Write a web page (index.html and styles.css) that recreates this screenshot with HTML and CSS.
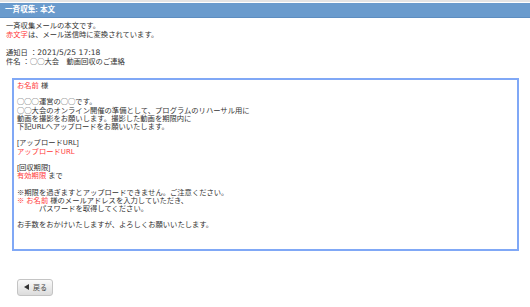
FILE: index.html
```html
<!DOCTYPE html>
<html>
<head>
    <title>一斉収集: 本文</title>
    <link rel="stylesheet" href="styles.css">
</head>
<body>
    <div class="page-title">一斉収集: 本文</div>
    <div class="intro">
        <p>一斉収集メールの本文です。<br><span class="red">赤文字</span>は、メール送信時に変換されています。</p>
        <p>通知日 ：<span class="date">2021/5/25 17:18</span><br>件名 ：◯◯大会　動画回収のご連絡</p>
    </div>
    <div class="mail-box">
        <p><span class="red">お名前</span> 様</p>
        <p>◯◯◯運営の◯◯です。<br>◯◯大会のオンライン開催の準備として、プログラムのリハーサル用に<br>動画を撮影をお願いします。撮影した動画を期限内に<br>下記<span class="latin">URL</span>へアップロードをお願いいたします。</p>
        <p>[アップロード<span class="latin">URL</span>]<br><span class="red">アップロード<span class="latin">URL</span></span></p>
        <p>[回収期限]<br><span class="red">有効期限</span> まで</p>
        <p>※期限を過ぎますとアップロードできません。ご注意ください。<br><span class="red">※ お名前</span> 様のメールアドレスを入力していただき、<br><span class="indent">パスワードを取得してください。</span></p>
        <p>お手数をおかけいたしますが、よろしくお願いいたします。</p>
    </div>
    <div class="button-container">
        <button class="back-button" onclick="history.back()"><span class="arrow"></span>戻る</button>
    </div>
</body>
</html>
```

FILE: styles.css
```css
body {
    margin: 0;
    border-top: 2px solid #e4e4e4;
    padding-top: 1px;
    font-family: "Liberation Sans", "Noto Sans CJK JP", sans-serif;
    font-size: 7.3px;
    color: #333;
    background-color: white;
}
.page-title {
    height: 14px;
    line-height: 14px;
    padding-left: 5px;
    background-color: #6a9bcd;
    color: white;
    font-weight: bold;
    font-size: 7.6px;
    border-bottom: 1px solid #5d8dc0;
}
.intro {
    padding: 3px 6px 0;
    line-height: 9px;
}
.intro p {
    margin: 0 0 9px;
}
.intro p:last-child {
    margin-bottom: 0;
}
.date {
    font-family: "DejaVu Sans", sans-serif;
    font-size: 7.6px;
}
.latin {
    font-family: "DejaVu Sans", sans-serif;
    font-size: 7px;
}
.red {
    color: #ff3a3a;
}
.indent {
    padding-left: 22px;
}
.mail-box {
    margin: 12px 11px 0 12px;
    padding: 2px 3px 19px;
    border: 2px solid #80a8f6;
    line-height: 8.2px;
}
.mail-box p {
    margin: 0 0 8.2px;
}
.mail-box p:last-child {
    margin-bottom: 0;
}
.button-container {
    padding: 28px 0 0 17px;
}
.back-button {
    display: flex;
    align-items: center;
    gap: 4px;
    width: 36px;
    height: 17px;
    padding: 0 0 0 6px;
    border: 1px solid #c4c4c4;
    border-radius: 3px;
    background: linear-gradient(#fafafa, #dcdcdc);
    font-family: "Liberation Sans", "Noto Sans CJK JP", sans-serif;
    font-size: 7px;
    color: #444;
    cursor: pointer;
}
.arrow {
    width: 0;
    height: 0;
    border-top: 3px solid transparent;
    border-bottom: 3px solid transparent;
    border-right: 5px solid #333;
}
```
